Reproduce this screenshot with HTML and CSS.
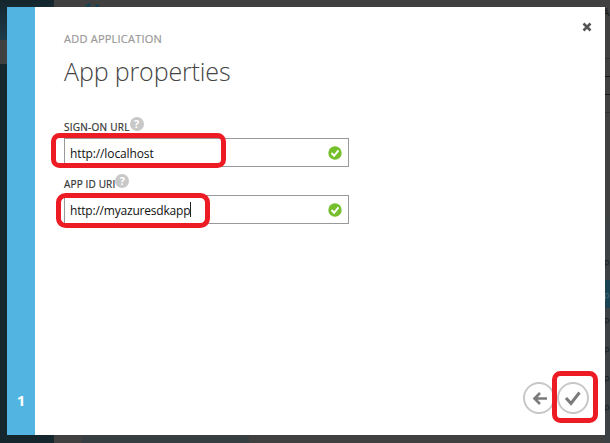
FILE: index.html
```
<!DOCTYPE html>
<html lang="en">
<head>
<meta charset="utf-8">
<title>App properties</title>
<link rel="stylesheet" href="styles.css">
</head>
<body>
<div class="portal" aria-hidden="true">
  <div class="portal-nav"><i class="nav-top"></i><i class="nav-gap"></i></div>
  <div class="portal-main">
    <svg class="portal-logo" width="18" height="8" viewBox="0 0 18 8"><path d="M1 8Q2 3 7 3Q7 6 4 8Z" fill="#174057"/><path d="M11 5l3-1 2 4h-3z" fill="#174057"/></svg>
    <i class="portal-foot"></i>
  </div>
  <div class="portal-edge">
    <i class="edge-top">A</i><i class="line"></i><i class="line dark"></i><i class="line dark"></i><i class="line"></i>
    <i class="edge-space"></i>
    <b>p</b><b class="selected">p</b><b>p</b><b>p</b><b>p</b><b>p</b>
  </div>
</div>
<main class="dialog">
  <aside class="steps"><span>1</span></aside>
  <section class="content">
    <button class="close" aria-label="Close"><svg width="10" height="10" viewBox="0 0 10 10"><path d="M1.5 1.5L8.5 8.5M8.5 1.5L1.5 8.5" stroke="#555" stroke-width="2.6"/></svg></button>
    <p class="eyebrow">ADD APPLICATION</p>
    <h1>App properties</h1>
    <div class="field">
      <div class="label"><span class="sign-label">SIGN-ON URL</span><i class="help">?</i></div>
      <div class="input"><span class="sign-value">http://localhost</span>
        <svg class="valid" width="14" height="14" viewBox="0 0 14 14"><circle cx="7" cy="7" r="6.7" fill="#74bf2b"/><path d="M3.5 7l2.6 2.8L10.5 4.3" fill="none" stroke="#fff" stroke-width="2"/></svg>
        <svg class="mark" width="176" height="35"><rect x="2.5" y="2.5" width="170" height="30" rx="6"/></svg>
      </div>
    </div>
    <div class="field">
      <div class="label"><span class="app-label">APP ID URI</span><i class="help">?</i></div>
      <div class="input"><span class="app-value">http://myazuresdkapp</span><i class="caret"></i>
        <svg class="valid" width="14" height="14" viewBox="0 0 14 14"><circle cx="7" cy="7" r="6.7" fill="#74bf2b"/><path d="M3.5 7l2.6 2.8L10.5 4.3" fill="none" stroke="#fff" stroke-width="2"/></svg>
        <svg class="mark mark-app" width="156" height="36"><rect x="2.5" y="2.5" width="149" height="30" rx="7"/></svg>
      </div>
    </div>
    <div class="actions">
      <button aria-label="Back"><svg width="32" height="32" viewBox="0 0 32 32"><circle cx="16" cy="16" r="15" fill="none" stroke="#c8c8c8" stroke-width="2"/><path d="M24 16.5H11.5M17 11l-5.5 5.5L17 22" fill="none" stroke="#7b7b7b" stroke-width="2.6"/></svg></button>
      <button aria-label="Complete"><svg width="32" height="32" viewBox="0 0 32 32"><circle cx="16" cy="16" r="15" fill="none" stroke="#c8c8c8" stroke-width="2"/><path d="M9 16l5 5.5L22.5 10.5" fill="none" stroke="#7b7b7b" stroke-width="3"/></svg>
      <svg class="mark-button" width="46" height="53"><rect x="2.5" y="2.5" width="41" height="47" rx="6"/></svg></button>
    </div>
  </section>
</main>
</body>
</html>
```
FILE: styles.css
```
* { box-sizing: border-box; }
body { margin: 0; width: 610px; height: 443px; overflow: hidden; position: relative; font-family: "Open Sans", "Noto Sans", sans-serif; background: #404040; }
i { font-style: normal; }
p, h1 { margin: 0; }
button { padding: 0; border: 0; background: none; }
svg { display: block; }
.portal { display: grid; grid-template-columns: 54px 1fr 7px; height: 443px; }
.portal-nav { background: #15262d; }
.nav-top { display: block; height: 40px; background: linear-gradient(#15262d, #1d3b49); }
.nav-gap { display: block; height: 24px; background: #404040; }
.portal-main { display: flex; flex-direction: column; justify-content: space-between; }
.portal-logo { margin-left: 30px; }
.portal-foot { height: 10px; margin-left: 28px; width: 167px; background: #373e42; }
.portal-edge { display: flex; flex-direction: column; background: linear-gradient(#404040 210px, #3c4143 230px); color: #171a1b; overflow: hidden; }
.edge-top { height: 58px; flex: none; font-size: 10px; line-height: 24px; }
.line { height: 18px; flex: none; border-top: 1px solid #303030; }
.line.dark { border-color: #191919; }
.edge-space { height: 117px; flex: none; }
.portal-edge b { flex: none; height: 29px; padding-left: 1px; font-size: 9px; line-height: 29px; font-weight: 400; }
.portal-edge b.selected { margin-top: 4px; background: #194353; color: #476b79; height: 28px; margin-bottom: -3px; }
.dialog { position: absolute; left: 7px; top: 7px; width: 598px; height: 428px; display: flex; background: #fff; }
.steps { width: 28px; background: #52b5e1; color: #fff; display: flex; align-items: flex-end; justify-content: center; padding-bottom: 24px; font-size: 15px; line-height: 22px; font-weight: 700; }
.content { flex: 1; padding: 24px 16px 21px 29px; display: flex; flex-direction: column; position: relative; }
.close { position: absolute; right: 13px; top: 15px; }
.eyebrow { font-size: 11px; line-height: 16px; color: #999; letter-spacing: .23px; -webkit-text-stroke: .2px #999; }
h1 { margin-top: 7px; font-size: 25px; line-height: 35px; font-weight: 300; color: #444; white-space: nowrap; letter-spacing: -.13px; }
.field { width: 285px; height: 57px; }
h1 + .field { margin-top: 26px; }
.label { height: 23px; display: flex; align-items: flex-start; font-size: 10px; line-height: 24px; color: #333; white-space: nowrap; -webkit-text-stroke: .2px #333; }
.sign-label { letter-spacing: .25px; }
.app-label { letter-spacing: .15px; }
.help { width: 14px; height: 14px; border-radius: 50%; background: #c8c8c8; color: #fff; font-size: 11px; line-height: 14px; font-weight: 700; text-align: center; margin: 2px 0 0 0; -webkit-text-stroke: 0; }
.input { position: relative; width: 285px; height: 29px; border: 1px solid #999; display: flex; align-items: center; padding: 0 6px 0 5px; font-size: 12px; color: #111; white-space: nowrap; }
.sign-value { letter-spacing: -.12px; padding-top: 1px; }
.app-value { letter-spacing: -.2px; padding-top: 1px; }
.valid { margin-left: auto; }
.caret { width: 1px; height: 15px; background: #222; }
.mark, .mark-button { position: absolute; overflow: visible; }
.mark { left: -14px; top: -6px; }
.mark-app { left: -9px; top: -3px; }
.mark rect { fill: none; stroke: #ed1c24; stroke-width: 5; }
.mark-button rect { fill: none; stroke: #ed1c24; stroke-width: 5; }
.actions { display: flex; justify-content: flex-end; gap: 2px; margin-top: auto; }
.actions button { position: relative; width: 32px; height: 32px; }
.mark-button { left: -5px; top: -11px; }
```
